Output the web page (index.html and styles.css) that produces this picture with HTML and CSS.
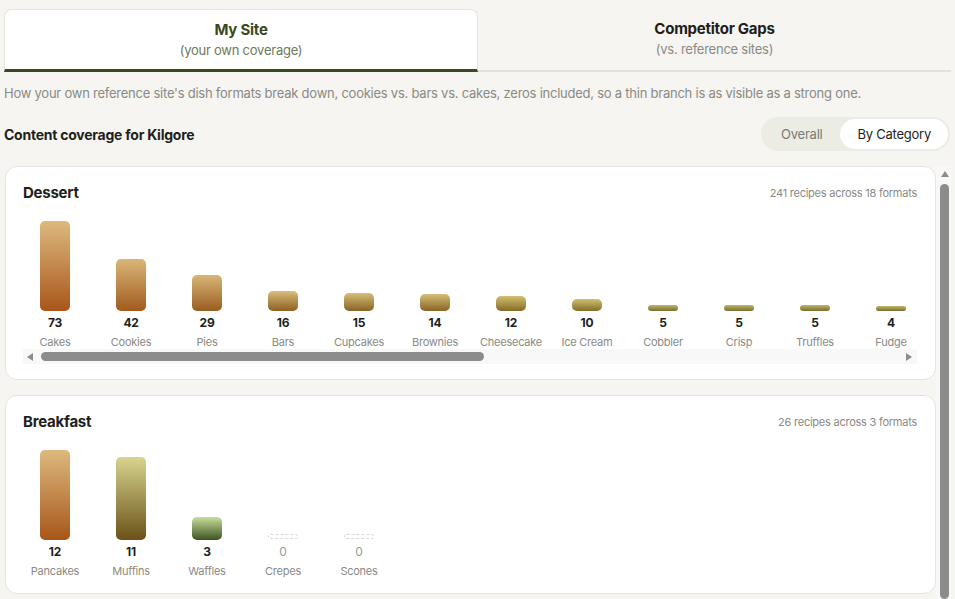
FILE: index.html
```html
<!DOCTYPE html>
<html lang="en">
<head>
<meta charset="utf-8">
<title>Content coverage</title>
<link rel="stylesheet" href="styles.css">
</head>
<body>
<div class="app">
  <div class="tabs">
    <div class="tab tab-active">
      <span class="tab-title">My Site</span>
      <span class="tab-sub">(your own coverage)</span>
    </div>
    <div class="tab">
      <span class="tab-title">Competitor Gaps</span>
      <span class="tab-sub">(vs. reference sites)</span>
    </div>
  </div>

  <p class="desc">How your own reference site's dish formats break down, cookies vs. bars vs. cakes, zeros included, so a thin branch is as visible as a strong one.</p>

  <div class="section-head">
    <h2 class="section-title">Content coverage for Kilgore</h2>
    <div class="toggle">
      <span class="toggle-btn">Overall</span>
      <span class="toggle-btn toggle-on">By Category</span>
    </div>
  </div>

  <div class="viewport">
    <div class="scroller">
      <section class="card">
        <div class="card-head">
          <h3 class="card-title">Dessert</h3>
          <span class="card-meta">241 recipes across 18 formats</span>
        </div>
        <div class="chart-scroll">
          <div class="chart">
            <div class="col"><div class="bar-area"><div class="bar tone-1" style="height:90px"></div></div><div class="val">73</div><div class="lbl">Cakes</div></div>
            <div class="col"><div class="bar-area"><div class="bar tone-2" style="height:52px"></div></div><div class="val">42</div><div class="lbl">Cookies</div></div>
            <div class="col"><div class="bar-area"><div class="bar tone-3" style="height:36px"></div></div><div class="val">29</div><div class="lbl">Pies</div></div>
            <div class="col"><div class="bar-area"><div class="bar tone-4" style="height:20px"></div></div><div class="val">16</div><div class="lbl">Bars</div></div>
            <div class="col"><div class="bar-area"><div class="bar tone-5" style="height:18px"></div></div><div class="val">15</div><div class="lbl">Cupcakes</div></div>
            <div class="col"><div class="bar-area"><div class="bar tone-5" style="height:17px"></div></div><div class="val">14</div><div class="lbl">Brownies</div></div>
            <div class="col"><div class="bar-area"><div class="bar tone-6" style="height:15px"></div></div><div class="val">12</div><div class="lbl">Cheesecake</div></div>
            <div class="col"><div class="bar-area"><div class="bar tone-7" style="height:12px"></div></div><div class="val">10</div><div class="lbl">Ice Cream</div></div>
            <div class="col"><div class="bar-area"><div class="bar tone-8" style="height:6px"></div></div><div class="val">5</div><div class="lbl">Cobbler</div></div>
            <div class="col"><div class="bar-area"><div class="bar tone-8" style="height:6px"></div></div><div class="val">5</div><div class="lbl">Crisp</div></div>
            <div class="col"><div class="bar-area"><div class="bar tone-8" style="height:6px"></div></div><div class="val">5</div><div class="lbl">Truffles</div></div>
            <div class="col"><div class="bar-area"><div class="bar tone-8" style="height:5px"></div></div><div class="val">4</div><div class="lbl">Fudge</div></div>
            <div class="col"><div class="bar-area"><div class="bar tone-8" style="height:4px"></div></div><div class="val">3</div><div class="lbl">Tarts</div></div>
            <div class="col"><div class="bar-area"><div class="bar tone-8" style="height:3px"></div></div><div class="val">2</div><div class="lbl">Mousse</div></div>
            <div class="col"><div class="bar-area"><div class="bar tone-8" style="height:3px"></div></div><div class="val">2</div><div class="lbl">Pudding</div></div>
            <div class="col"><div class="bar-area"><div class="bar tone-8" style="height:3px"></div></div><div class="val">2</div><div class="lbl">Macarons</div></div>
            <div class="col"><div class="bar-area"><div class="bar tone-8" style="height:2px"></div></div><div class="val">1</div><div class="lbl">Cannoli</div></div>
            <div class="col"><div class="bar-area"><div class="bar tone-8" style="height:2px"></div></div><div class="val">1</div><div class="lbl">Trifle</div></div>
          </div>
        </div>
        <div class="hbar">
          <span class="arrow arrow-left"></span>
          <span class="hthumb" style="width:443px"></span>
          <span class="hbar-fill"></span>
          <span class="arrow arrow-right"></span>
        </div>
      </section>

      <section class="card">
        <div class="card-head">
          <h3 class="card-title">Breakfast</h3>
          <span class="card-meta">26 recipes across 3 formats</span>
        </div>
        <div class="chart-scroll">
          <div class="chart">
            <div class="col"><div class="bar-area"><div class="bar tone-1" style="height:90px"></div></div><div class="val">12</div><div class="lbl">Pancakes</div></div>
            <div class="col"><div class="bar-area"><div class="bar tone-olive" style="height:83px"></div></div><div class="val">11</div><div class="lbl">Muffins</div></div>
            <div class="col"><div class="bar-area"><div class="bar tone-green" style="height:23px"></div></div><div class="val">3</div><div class="lbl">Waffles</div></div>
            <div class="col"><div class="bar-area"><div class="bar bar-zero"></div></div><div class="val val-zero">0</div><div class="lbl">Crepes</div></div>
            <div class="col"><div class="bar-area"><div class="bar bar-zero"></div></div><div class="val val-zero">0</div><div class="lbl">Scones</div></div>
          </div>
        </div>
      </section>
    </div>
    <div class="vbar">
      <span class="arrow arrow-up"></span>
      <span class="vthumb"></span>
    </div>
  </div>
</div>
</body>
</html>
```

FILE: styles.css
```css
html, body {
  margin: 0;
  padding: 0;
  overflow: hidden;
  background: #f6f5f1;
}

body {
  font-family: "Inter", "Liberation Sans", sans-serif;
  letter-spacing: -0.015em;
  color: #1e1e1c;
}

.app {
  padding: 9px 4px 0;
}

/* Tabs */
.tabs {
  display: grid;
  grid-template-columns: 474px 1fr;
  align-items: start;
}

.tab {
  display: flex;
  flex-direction: column;
  align-items: center;
  padding: 10px 0 0;
  height: 51px;
  border-bottom: 2px solid #e3e1da;
}

.tab-active {
  height: 49px;
  background: #ffffff;
  border: 1px solid #e6e4dd;
  border-bottom: 3px solid #3a4a1f;
  border-radius: 8px 8px 0 0;
}

.tab-title {
  font-size: 15px;
  font-weight: 700;
  line-height: 20px;
  color: #1e1e1c;
}

.tab-active .tab-title {
  color: #3a4a1f;
}

.tab-sub {
  font-size: 13px;
  line-height: 20px;
  color: #8a8a86;
}

.tab-active .tab-sub {
  color: #6e7a5a;
}

/* Description */
.desc {
  margin: 12px 0 0;
  font-size: 13px;
  line-height: 18px;
  color: #8a8a85;
}

/* Section head */
.section-head {
  display: flex;
  align-items: center;
  justify-content: space-between;
  margin-top: 15px;
}

.section-title {
  margin: 0;
  font-size: 14px;
  font-weight: 700;
  color: #1e1e1c;
}

.toggle {
  display: flex;
  padding: 2px;
  background: #ebede4;
  border-radius: 17px;
  margin-right: 1px;
}

.toggle-btn {
  font-size: 13px;
  line-height: 30px;
  padding: 0 18px;
  border-radius: 15px;
  color: #7a7a76;
}

.toggle-on {
  background: #ffffff;
  color: #1e1e1c;
  padding: 0 17px;
}

/* Scroll area */
.viewport {
  display: flex;
  margin-top: 15px;
  height: 449px;
}

.scroller {
  flex: 1;
  min-width: 0;
  overflow: hidden;
  padding-left: 1px;
}

.vbar {
  width: 15px;
  box-sizing: border-box;
  padding: 5px 2px 0 4px;
  background: #f8f8f6;
  display: flex;
  flex-direction: column;
  align-items: center;
}

.vthumb {
  display: block;
  width: 9px;
  height: 415px;
  margin-top: 7px;
  border-radius: 5px;
  background: #8c8c8c;
}

.arrow {
  display: block;
  width: 0;
  height: 0;
  flex: none;
}

.arrow-up {
  border-left: 4px solid transparent;
  border-right: 4px solid transparent;
  border-bottom: 6px solid #8c8c8c;
}

.arrow-left {
  border-top: 4px solid transparent;
  border-bottom: 4px solid transparent;
  border-right: 6px solid #8c8c8c;
}

.arrow-right {
  border-top: 4px solid transparent;
  border-bottom: 4px solid transparent;
  border-left: 6px solid #8c8c8c;
}

.card {
  background: #ffffff;
  border: 1px solid #e6e4dd;
  border-radius: 12px;
  padding: 16px 18px 15px 17px;
  margin-bottom: 15px;
}

.card-head {
  display: flex;
  align-items: center;
  justify-content: space-between;
}

.card-title {
  margin: 0;
  font-size: 15px;
  font-weight: 700;
  line-height: 20px;
  color: #1e1e1c;
}

.card-meta {
  font-size: 11px;
  color: #8a8a86;
}

.chart-scroll {
  margin-top: 8px;
  overflow: hidden;
}

.chart {
  display: flex;
  gap: 12px;
  width: max-content;
}

.col {
  width: 64px;
  display: flex;
  flex-direction: column;
  align-items: center;
}

.bar-area {
  height: 100px;
  display: flex;
  align-items: flex-end;
}

.bar {
  width: 30px;
  border-radius: 5px;
}

.bar-zero {
  height: 5px;
  box-sizing: border-box;
  border: 1px dashed #dcdad4;
  border-radius: 3px;
  margin-bottom: 1px;
}

.tone-1 { background: linear-gradient(#ddb97e, #a8561a); }
.tone-2 { background: linear-gradient(#dab679, #a15a1d); }
.tone-3 { background: linear-gradient(#d8b676, #995d20); }
.tone-4 { background: linear-gradient(#d9bd7b, #8d5f22); }
.tone-5 { background: linear-gradient(#d6bf77, #886325); }
.tone-6 { background: linear-gradient(#d2c070, #856a27); }
.tone-7 { background: linear-gradient(#cfc16e, #836e2a); }
.tone-8 { background: linear-gradient(#c0b568, #787030); }
.tone-olive { background: linear-gradient(#d8d48e, #6a5218); }
.tone-green { background: linear-gradient(#c9e09b, #3d5222); }

.val {
  margin-top: 4px;
  font-size: 12px;
  font-weight: 700;
  line-height: 16px;
  color: #1e1e1c;
}

.val-zero {
  font-weight: 400;
  color: #9a9a96;
}

.lbl {
  margin-top: 4px;
  font-size: 11px;
  line-height: 14px;
  color: #8a8a86;
  white-space: nowrap;
}

/* Horizontal scrollbar */
.hbar {
  display: flex;
  align-items: center;
  height: 15px;
  padding: 0 5px 0 4px;
  background: #f8f8f8;
}

.hthumb {
  display: block;
  height: 9px;
  margin-left: 8px;
  border-radius: 5px;
  background: #8c8c8c;
}

.hbar-fill {
  flex: 1;
}
```
